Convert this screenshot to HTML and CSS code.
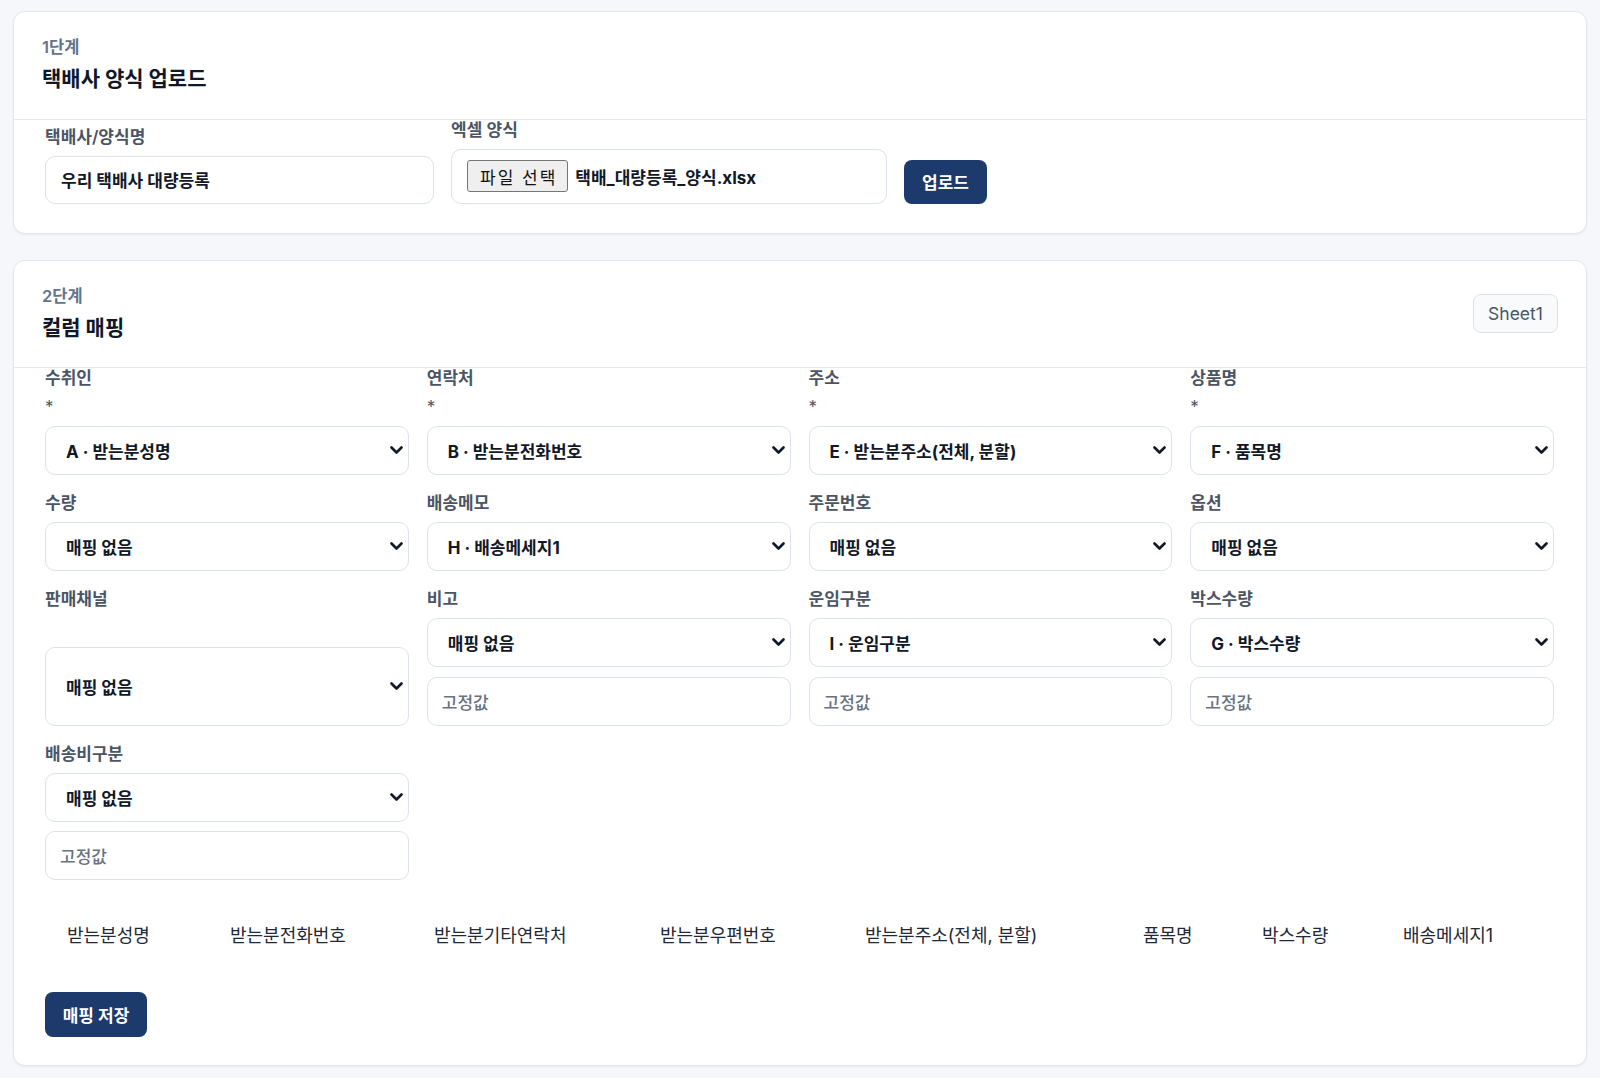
FILE: index.html
```html
<!DOCTYPE html>
<html lang="ko">
<head>
<meta charset="utf-8">
<title>택배사 양식 매핑</title>
<link rel="stylesheet" href="styles.css">
</head>
<body>
<main class="page">
  <section class="card">
    <header class="card-head">
      <div class="head-text">
        <div class="step">1단계</div>
        <h2 class="title">택배사 양식 업로드</h2>
      </div>
    </header>
    <div class="card-body upload-row">
      <div class="field name-field">
        <div class="label">택배사/양식명</div>
        <div class="input filled">우리 택배사 대량등록</div>
      </div>
      <div class="field file-field">
        <div class="label">엑셀 양식</div>
        <div class="file-box">
          <span class="file-btn">파일 선택</span>
          <span class="file-name">택배_대량등록_양식.xlsx</span>
        </div>
      </div>
      <button class="btn-primary upload-btn">업로드</button>
    </div>
  </section>

  <section class="card">
    <header class="card-head">
      <div class="head-text">
        <div class="step">2단계</div>
        <h2 class="title">컬럼 매핑</h2>
      </div>
      <button class="sheet-btn">Sheet1</button>
    </header>
    <div class="card-body map-body">
      <div class="map-grid">
        <div class="field">
          <div class="label">수취인</div>
          <div class="req">*</div>
          <div class="select"><span>A · 받는분성명</span><svg class="chev" viewBox="0 0 13 9"><polyline points="1.5,1.5 6.5,6.5 11.5,1.5"/></svg></div>
        </div>
        <div class="field">
          <div class="label">연락처</div>
          <div class="req">*</div>
          <div class="select"><span>B · 받는분전화번호</span><svg class="chev" viewBox="0 0 13 9"><polyline points="1.5,1.5 6.5,6.5 11.5,1.5"/></svg></div>
        </div>
        <div class="field">
          <div class="label">주소</div>
          <div class="req">*</div>
          <div class="select"><span>E · 받는분주소(전체, 분할)</span><svg class="chev" viewBox="0 0 13 9"><polyline points="1.5,1.5 6.5,6.5 11.5,1.5"/></svg></div>
        </div>
        <div class="field">
          <div class="label">상품명</div>
          <div class="req">*</div>
          <div class="select"><span>F · 품목명</span><svg class="chev" viewBox="0 0 13 9"><polyline points="1.5,1.5 6.5,6.5 11.5,1.5"/></svg></div>
        </div>

        <div class="field">
          <div class="label">수량</div>
          <div class="select"><span>매핑 없음</span><svg class="chev" viewBox="0 0 13 9"><polyline points="1.5,1.5 6.5,6.5 11.5,1.5"/></svg></div>
        </div>
        <div class="field">
          <div class="label">배송메모</div>
          <div class="select"><span>H · 배송메세지1</span><svg class="chev" viewBox="0 0 13 9"><polyline points="1.5,1.5 6.5,6.5 11.5,1.5"/></svg></div>
        </div>
        <div class="field">
          <div class="label">주문번호</div>
          <div class="select"><span>매핑 없음</span><svg class="chev" viewBox="0 0 13 9"><polyline points="1.5,1.5 6.5,6.5 11.5,1.5"/></svg></div>
        </div>
        <div class="field">
          <div class="label">옵션</div>
          <div class="select"><span>매핑 없음</span><svg class="chev" viewBox="0 0 13 9"><polyline points="1.5,1.5 6.5,6.5 11.5,1.5"/></svg></div>
        </div>

        <div class="field">
          <div class="label">판매채널</div>
          <div class="hint"></div>
          <div class="select grow"><span>매핑 없음</span><svg class="chev" viewBox="0 0 13 9"><polyline points="1.5,1.5 6.5,6.5 11.5,1.5"/></svg></div>
        </div>
        <div class="field">
          <div class="label">비고</div>
          <div class="select"><span>매핑 없음</span><svg class="chev" viewBox="0 0 13 9"><polyline points="1.5,1.5 6.5,6.5 11.5,1.5"/></svg></div>
          <div class="input placeholder">고정값</div>
        </div>
        <div class="field">
          <div class="label">운임구분</div>
          <div class="select"><span>I · 운임구분</span><svg class="chev" viewBox="0 0 13 9"><polyline points="1.5,1.5 6.5,6.5 11.5,1.5"/></svg></div>
          <div class="input placeholder">고정값</div>
        </div>
        <div class="field">
          <div class="label">박스수량</div>
          <div class="select"><span>G · 박스수량</span><svg class="chev" viewBox="0 0 13 9"><polyline points="1.5,1.5 6.5,6.5 11.5,1.5"/></svg></div>
          <div class="input placeholder">고정값</div>
        </div>

        <div class="field">
          <div class="label">배송비구분</div>
          <div class="select"><span>매핑 없음</span><svg class="chev" viewBox="0 0 13 9"><polyline points="1.5,1.5 6.5,6.5 11.5,1.5"/></svg></div>
          <div class="input placeholder">고정값</div>
        </div>
      </div>

      <div class="columns-row">
        <div class="col-name">받는분성명</div>
        <div class="col-name">받는분전화번호</div>
        <div class="col-name">받는분기타연락처</div>
        <div class="col-name">받는분우편번호</div>
        <div class="col-name">받는분주소(전체, 분할)</div>
        <div class="col-name">품목명</div>
        <div class="col-name">박스수량</div>
        <div class="col-name">배송메세지1</div>
      </div>

      <button class="btn-primary save-btn">매핑 저장</button>
    </div>
  </section>
</main>
</body>
</html>
```

FILE: styles.css
```css
* { box-sizing: border-box; }

html, body {
  margin: 0;
  padding: 0;
  background: #f5f7fb;
  font-family: Inter, "Noto Sans CJK KR", "Noto Sans", sans-serif;
  color: #111827;
}

.page {
  padding: 11px 13px 12px 13px;
  display: flex;
  flex-direction: column;
  gap: 26px;
}

.card {
  background: #ffffff;
  border: 1px solid #e1e6ef;
  border-radius: 12px;
  box-shadow: 0 1px 2px rgba(15, 23, 42, 0.05);
}

.card-head {
  display: flex;
  align-items: center;
  justify-content: space-between;
  padding: 24px 28px 24.5px 28px;
  border-bottom: 1px solid #e1e6ef;
}

.step {
  font-size: 16.5px;
  line-height: 22px;
  font-weight: 600;
  color: #64748b;
}

.title {
  margin: 6px 0 0;
  font-size: 21px;
  line-height: 30px;
  font-weight: 700;
  color: #0f172a;
}

.card-body {
  padding: 0 32px 29px 31px;
}

.upload-row {
  display: flex;
  align-items: flex-end;
  gap: 17px;
}

.field {
  display: flex;
  flex-direction: column;
}

.name-field { width: 389px; }
.file-field { width: 436px; }

.label {
  font-size: 17px;
  line-height: 20px;
  font-weight: 600;
  color: #4b5565;
  margin-bottom: 9px;
}

.req {
  font-size: 17px;
  line-height: 20px;
  color: #4b5565;
  margin-bottom: 9px;
}

.input {
  height: 49px;
  border: 1px solid #dbe2ed;
  border-radius: 10px;
  background: #fff;
  display: flex;
  align-items: center;
  padding: 0 15px;
  font-size: 17px;
}

.name-field .input { height: 48px; }

.input.filled {
  font-weight: 700;
  color: #111827;
}

.input.placeholder {
  color: #687281;
  font-weight: 500;
  margin-top: 9.5px;
  padding-left: 14px;
}

.file-box {
  height: 55px;
  border: 1px solid #dbe2ed;
  border-radius: 10px;
  display: flex;
  align-items: center;
  padding: 0 15px;
  gap: 7px;
}

.file-btn {
  height: 32px;
  padding: 0 10px 0 12px;
  display: inline-flex;
  align-items: center;
  background: #efefef;
  border: 1px solid #767676;
  border-radius: 3px;
  font-size: 17px;
  letter-spacing: 2px;
  color: #111;
}

.file-name {
  font-size: 17px;
  font-weight: 700;
  color: #111827;
}

.btn-primary {
  background: #1d3a6c;
  color: #ffffff;
  border: none;
  border-radius: 8px;
  font-family: inherit;
  font-size: 17px;
  font-weight: 700;
  padding: 0;
  cursor: pointer;
}

.upload-btn { width: 83px; height: 44px; }

.save-btn {
  width: 102px;
  height: 45px;
  margin-top: 31px;
  display: block;
}

.sheet-btn {
  width: 85px;
  height: 39px;
  padding: 0;
  background: #f8fafc;
  border: 1px solid #dbe2ed;
  border-radius: 8px;
  font-family: inherit;
  font-size: 17.5px;
  color: #475569;
}

.map-body {
  padding-top: 0;
  padding-bottom: 28px;
}

.map-grid {
  display: grid;
  grid-template-columns: repeat(4, 1fr);
  column-gap: 18px;
  row-gap: 18px;
}

.select {
  height: 49px;
  border: 1px solid #dbe2ed;
  border-radius: 10px;
  background: #fff;
  display: flex;
  align-items: center;
  justify-content: space-between;
  padding: 0 5px 0 20px;
  font-size: 17px;
  font-weight: 700;
  color: #111827;
}

.select.grow {
  flex: 1;
  height: auto;
}

.hint {
  height: 20px;
  margin-bottom: 9px;
}

.chev {
  width: 13px;
  height: 9px;
  fill: none;
  stroke: #111827;
  stroke-width: 2.6;
  stroke-linecap: round;
  stroke-linejoin: round;
}

.columns-row {
  margin-top: 31px;
  display: grid;
  grid-template-columns: 163px 204px 226px 205px 278px 119px 141px 1fr;
}

.col-name {
  padding: 12px 0 12px 22px;
  font-size: 18px;
  line-height: 26px;
  color: #1f2937;
  white-space: nowrap;
}
```
